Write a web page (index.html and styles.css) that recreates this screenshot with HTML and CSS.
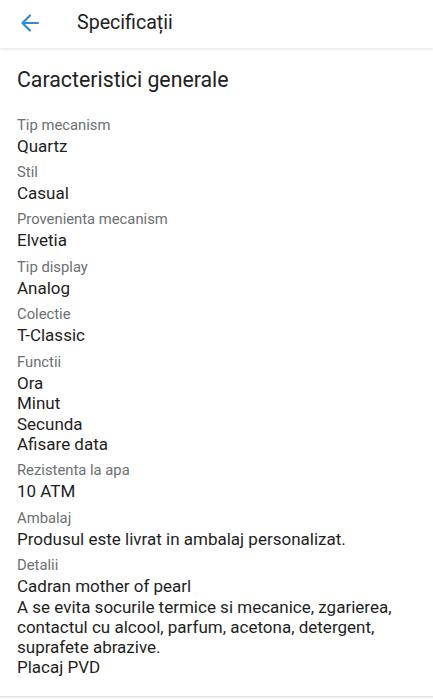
FILE: index.html
```html
<!DOCTYPE html>
<html lang="ro">

<head>
  <meta charset="UTF-8">
  <meta name="viewport" content="width=device-width, initial-scale=1.0">
  <title>Specificații</title>
  <link rel="stylesheet" href="styles.css">
</head>

<body>
  <header class="topbar">
    <button class="back" aria-label="Inapoi">
      <svg width="20" height="20" viewBox="0 0 20 20">
        <path d="M18 10H3M10 2.5L2.5 10L10 17.5" fill="none" stroke="#2f8ad6" stroke-width="2.2" stroke-linecap="round" stroke-linejoin="round" />
      </svg>
    </button>
    <h1 class="topbar__title">Specificații</h1>
  </header>

  <main class="specs">
    <h2 class="specs__heading">Caracteristici generale</h2>
    <dl class="specs__list">
      <dt>Tip mecanism</dt>
      <dd>Quartz</dd>
      <dt>Stil</dt>
      <dd>Casual</dd>
      <dt>Provenienta mecanism</dt>
      <dd>Elvetia</dd>
      <dt>Tip display</dt>
      <dd>Analog</dd>
      <dt>Colectie</dt>
      <dd>T-Classic</dd>
      <dt>Functii</dt>
      <dd>Ora<br>Minut<br>Secunda<br>Afisare data</dd>
      <dt>Rezistenta la apa</dt>
      <dd>10 ATM</dd>
      <dt>Ambalaj</dt>
      <dd>Produsul este livrat in ambalaj personalizat.</dd>
      <dt>Detalii</dt>
      <dd>Cadran mother of pearl<br>A se evita socurile termice si mecanice, zgarierea, contactul cu alcool, parfum, acetona, detergent, suprafete abrazive.<br>Placaj PVD</dd>
    </dl>
  </main>
</body>

</html>
```

FILE: styles.css
```css
* {
  box-sizing: border-box;
}

body {
  margin: 0;
  background: #f4f5f6;
  font-family: Roboto, "Noto Sans", sans-serif;
  color: #212121;
}

.topbar {
  display: flex;
  align-items: center;
  height: 48px;
  background: #fff;
  box-shadow: 0 1px 3px rgba(0, 0, 0, 0.12);
  position: relative;
  z-index: 1;
}

.back {
  display: flex;
  align-items: center;
  justify-content: center;
  width: 60px;
  height: 44px;
  padding: 0 0 2px;
  border: none;
  background: none;
}

.topbar__title {
  margin: 0 0 4px 17px;
  font-size: 19.6px;
  font-weight: 400;
  color: #222;
}

.specs {
  background: #fff;
  padding: 17px 17px 18px;
  border-bottom: 1px solid #e3e4e6;
}

.specs__heading {
  margin: 0 0 18.5px;
  font-size: 21.3px;
  font-weight: 400;
  line-height: 30px;
  color: #222;
}

.specs__list {
  margin: 0;
}

.specs__list dt {
  margin-top: 5.2px;
  font-size: 14.8px;
  line-height: 22px;
  color: #6b6f73;
}

.specs__list dd {
  margin: 0;
  font-size: 17px;
  line-height: 20.3px;
  color: #1e1e1e;
}
```
